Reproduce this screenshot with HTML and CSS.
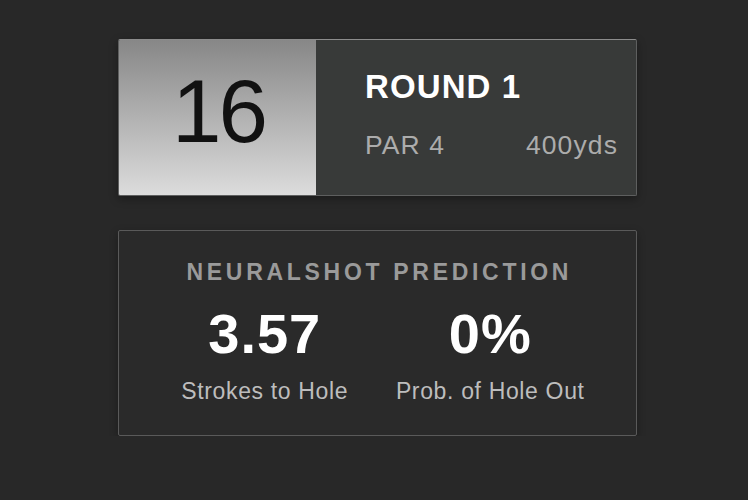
FILE: index.html
```html
<!DOCTYPE html>
<html>
<head>
<meta charset="utf-8">
<link rel="stylesheet" href="styles.css">
</head>
<body>
<main class="wrap">
  <section class="hole-card">
    <div class="hole-num">16</div>
    <div class="hole-info">
      <div class="round">ROUND 1</div>
      <div class="meta">
        <span>PAR 4</span>
        <span>400yds</span>
      </div>
    </div>
  </section>
  <section class="pred-card">
    <div class="pred-title">NEURALSHOT PREDICTION</div>
    <div class="pred-stats">
      <div class="stat">
        <div class="stat-value">3.57</div>
        <div class="stat-label">Strokes to Hole</div>
      </div>
      <div class="stat">
        <div class="stat-value">0%</div>
        <div class="stat-label">Prob. of Hole Out</div>
      </div>
    </div>
  </section>
</main>
</body>
</html>
```
FILE: styles.css
```css
html, body {
  margin: 0;
  padding: 0;
  background: #282828;
  font-family: "Liberation Sans", Arial, Helvetica, sans-serif;
}
.wrap {
  width: 519px;
  margin: 39px 0 0 118px;
  display: flex;
  flex-direction: column;
  gap: 34px;
}
.hole-card {
  display: flex;
  height: 157px;
  box-sizing: border-box;
  border: 1px solid #5e5f5f;
  border-top-color: #8c8c8c;
  border-radius: 2px;
  background: #383a39;
  box-shadow: 0 3px 8px rgba(0,0,0,0.35);
  overflow: hidden;
}
.hole-num {
  width: 197px;
  flex: none;
  display: flex;
  align-items: center;
  justify-content: center;
  padding: 0 0 13px 2px;
  box-sizing: border-box;
  background: linear-gradient(to bottom, #878787, #dcdcdc);
  color: #111;
  font-size: 89px;
  line-height: 89px;
  letter-spacing: -3px;
}
.hole-info {
  flex: 1;
  padding: 28px 18px 0 49px;
}
.round {
  color: #fff;
  font-weight: bold;
  font-size: 33px;
  line-height: 38px;
  letter-spacing: 1.1px;
  margin-bottom: 24px;
}
.meta {
  display: flex;
  justify-content: space-between;
  color: #acacac;
  font-size: 26.5px;
  line-height: 30px;
  letter-spacing: 1.1px;
}
.pred-card {
  height: 206px;
  box-sizing: border-box;
  border: 1px solid #5a5a5a;
  border-radius: 2px;
  background: #2a2a2a;
  box-shadow: 0 3px 8px rgba(0,0,0,0.3);
  padding: 27px 33px 0;
  text-align: center;
}
.pred-title {
  color: #9a9a9a;
  font-weight: bold;
  font-size: 23px;
  line-height: 28px;
  letter-spacing: 3.7px;
  margin-right: -3.7px;
  margin-bottom: 16px;
}
.pred-stats {
  display: flex;
}
.stat {
  flex: 1;
}
.stat-value {
  color: #fff;
  font-weight: bold;
  font-size: 56px;
  line-height: 64px;
  letter-spacing: 1px;
  margin-bottom: 11px;
}
.stat-label {
  color: #bdbdbd;
  font-size: 23px;
  line-height: 28px;
  letter-spacing: 0.65px;
}
```
